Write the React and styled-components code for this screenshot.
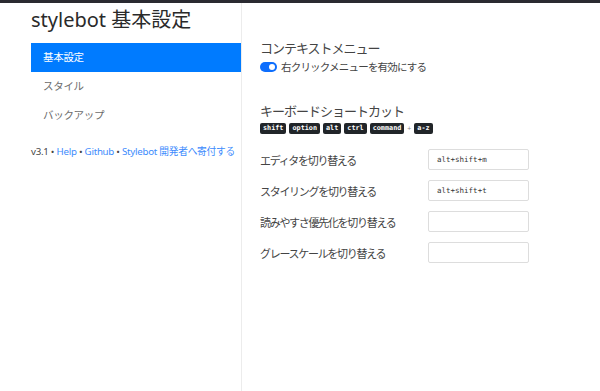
import React from "react";
import styled, { createGlobalStyle } from "styled-components";

const Global = createGlobalStyle`
  html, body {
    margin: 0;
    padding: 0;
    background: #fff;
    font-family: "Noto Sans", "Noto Sans CJK JP", sans-serif;
    color: #212529;
  }
`;

const TopBar = styled.div`
  height: 3px;
  background: #2a2a31;
`;

const Layout = styled.div`
  display: flex;
  height: 388px;
`;

const Sidebar = styled.aside`
  width: 210px;
  padding-left: 31px;
  border-right: 1px solid #ececec;
  box-sizing: content-box;
`;

const Title = styled.h1`
  margin: 2px 0 0;
  font-size: 20px;
  line-height: 30px;
  font-weight: 400;
  color: #2a2a2a;
  white-space: nowrap;
`;

const Nav = styled.ul`
  list-style: none;
  margin: 8px 0 0;
  padding: 0;
`;

const NavItem = styled.li`
  height: 29px;
  line-height: 29px;
  padding-left: 12px;
  font-size: 10.5px;
  letter-spacing: -0.3px;
  color: ${(p) => (p.active ? "#fff" : "#6c6c6c")};
  background: ${(p) => (p.active ? "#007bff" : "transparent")};
`;

const Footer = styled.div`
  margin-top: 13px;
  font-size: 9.7px;
  letter-spacing: -0.25px;
  line-height: 18px;
  color: #444;
  white-space: nowrap;
  a {
    color: #3d8bfd;
    text-decoration: none;
  }
`;

const Main = styled.main`
  flex: 1;
  padding: 35px 0 0 18px;
`;

const Heading = styled.h2`
  margin: ${(p) => p.top || 0}px 0 0;
  font-size: 13px;
  letter-spacing: -1px;
  line-height: 20px;
  font-weight: 400;
  color: #444;
`;

const SwitchRow = styled.label`
  display: flex;
  align-items: center;
  gap: 4px;
  margin-top: 1px;
  font-size: 10.5px;
  letter-spacing: -0.8px;
  line-height: 16px;
  color: #444;
`;

const Switch = styled.span`
  position: relative;
  width: 17px;
  height: 10px;
  border-radius: 5px;
  background: #0d6efd;
  &::after {
    content: "";
    position: absolute;
    right: 2px;
    top: 2px;
    width: 6px;
    height: 6px;
    border-radius: 50%;
    background: #fff;
  }
`;

const Keys = styled.div`
  display: flex;
  align-items: center;
  gap: 3px;
  margin-top: 2px;
`;

const Kbd = styled.kbd`
  display: inline-block;
  height: 11px;
  line-height: 11px;
  padding: 0 3px;
  border-radius: 2px;
  background: #212529;
  color: #fff;
  font-family: "DejaVu Sans Mono", monospace;
  font-size: 6.8px;
  font-weight: 700;
`;

const Plus = styled.span`
  font-size: 7px;
  color: #888;
`;

const Shortcuts = styled.div`
  display: grid;
  grid-template-columns: 168px 101px;
  row-gap: 10px;
  margin-top: 15px;
  align-items: center;
`;

const Label = styled.span`
  font-size: 11px;
  letter-spacing: -1.3px;
  color: #444;
`;

const Input = styled.input`
  box-sizing: border-box;
  width: 101px;
  height: 21px;
  border: 1px solid #ddd;
  border-radius: 2px;
  padding: 0 8px;
  font-family: "DejaVu Sans Mono", monospace;
  font-size: 7.5px;
  color: #333;
  outline: none;
`;

const shortcuts = [
  ["エディタを切り替える", "alt+shift+m"],
  ["スタイリングを切り替える", "alt+shift+t"],
  ["読みやすさ優先化を切り替える", ""],
  ["グレースケールを切り替える", ""],
];

export default function App() {
  return (
    <>
      <Global />
      <TopBar />
      <Layout>
        <Sidebar>
          <Title>stylebot 基本設定</Title>
          <Nav>
            <NavItem active>基本設定</NavItem>
            <NavItem>スタイル</NavItem>
            <NavItem>バックアップ</NavItem>
          </Nav>
          <Footer>
            v3.1 • <a href="#">Help</a> • <a href="#">Github</a> •{" "}
            <a href="#">Stylebot 開発者へ寄付する</a>
          </Footer>
        </Sidebar>
        <Main>
          <Heading>コンテキストメニュー</Heading>
          <SwitchRow>
            <Switch />
            右クリックメニューを有効にする
          </SwitchRow>
          <Heading top={26}>キーボードショートカット</Heading>
          <Keys>
            <Kbd>shift</Kbd>
            <Kbd>option</Kbd>
            <Kbd>alt</Kbd>
            <Kbd>ctrl</Kbd>
            <Kbd>command</Kbd>
            <Plus>+</Plus>
            <Kbd>a-z</Kbd>
          </Keys>
          <Shortcuts>
            {shortcuts.map(([label, value]) => (
              <React.Fragment key={label}>
                <Label>{label}</Label>
                <Input defaultValue={value} readOnly />
              </React.Fragment>
            ))}
          </Shortcuts>
        </Main>
      </Layout>
    </>
  );
}
